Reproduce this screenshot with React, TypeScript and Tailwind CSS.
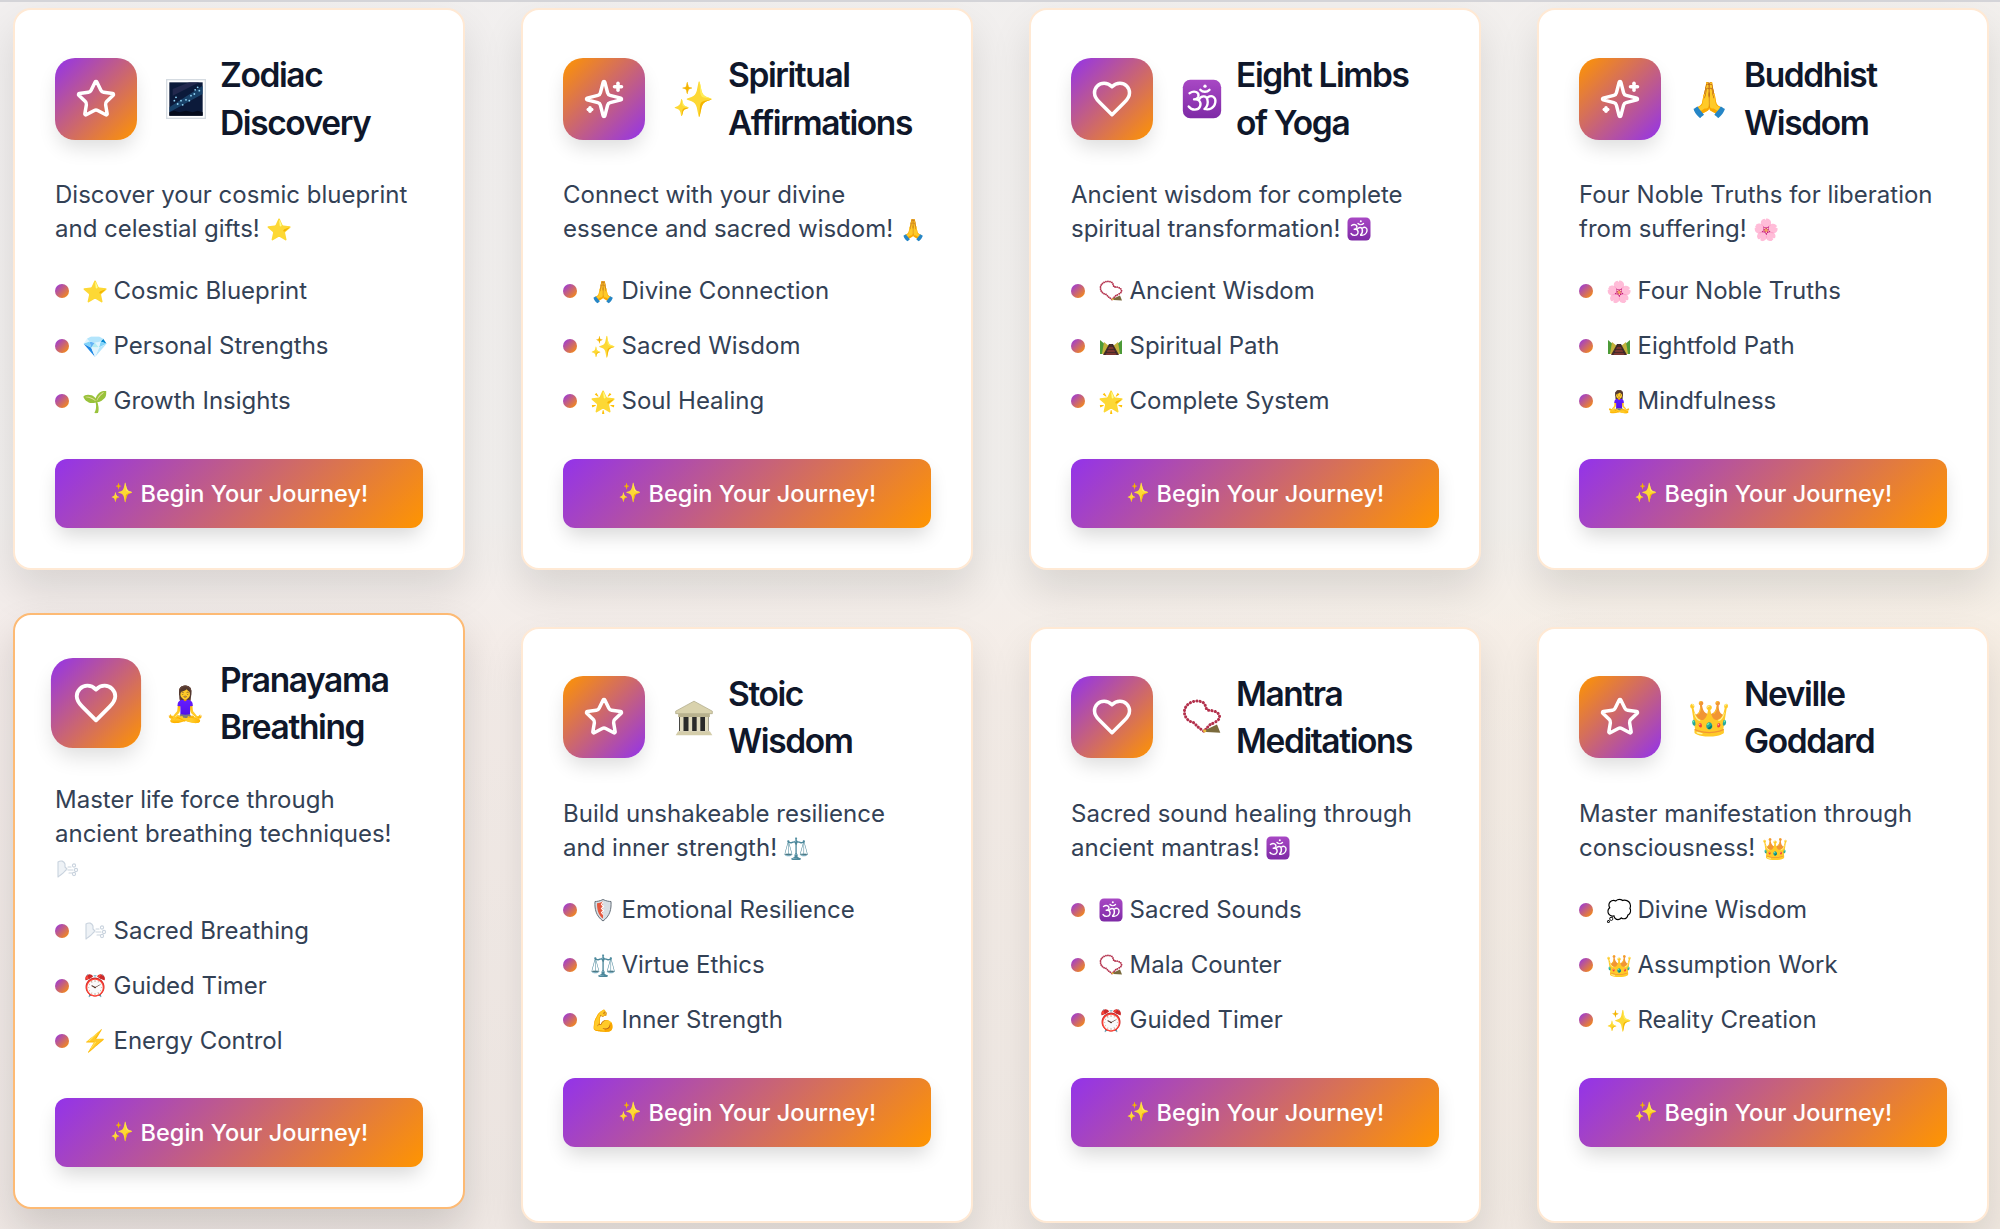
import React from "react";

type Card = { icon: "star" | "spark" | "heart"; from: "purple" | "orange"; emoji: string; t: [string, string]; d: string; de: string; f: [string, string][]; hover?: boolean };

const cards: Card[] = [
  { icon: "star", from: "purple", emoji: "galaxy", t: ["Zodiac", "Discovery"], d: "Discover your cosmic blueprint and celestial gifts!", de: "⭐", f: [["⭐", "Cosmic Blueprint"], ["💎", "Personal Strengths"], ["🌱", "Growth Insights"]] },
  { icon: "spark", from: "orange", emoji: "✨", t: ["Spiritual", "Affirmations"], d: "Connect with your divine essence and sacred wisdom!", de: "🙏", f: [["🙏", "Divine Connection"], ["✨", "Sacred Wisdom"], ["🌟", "Soul Healing"]] },
  { icon: "heart", from: "purple", emoji: "om", t: ["Eight Limbs", "of Yoga"], d: "Ancient wisdom for complete spiritual transformation!", de: "om", f: [["mala", "Ancient Wisdom"], ["track", "Spiritual Path"], ["🌟", "Complete System"]] },
  { icon: "spark", from: "orange", emoji: "🙏", t: ["Buddhist", "Wisdom"], d: "Four Noble Truths for liberation from suffering!", de: "🌸", f: [["🌸", "Four Noble Truths"], ["track", "Eightfold Path"], ["🧘‍♀️", "Mindfulness"]] },
  { icon: "heart", from: "purple", emoji: "🧘‍♀️", t: ["Pranayama", "Breathing"], d: "Master life force through ancient breathing techniques!", de: "wind", f: [["wind", "Sacred Breathing"], ["⏰", "Guided Timer"], ["⚡", "Energy Control"]], hover: true },
  { icon: "star", from: "orange", emoji: "temple", t: ["Stoic", "Wisdom"], d: "Build unshakeable resilience and inner strength!", de: "⚖️", f: [["shield", "Emotional Resilience"], ["⚖️", "Virtue Ethics"], ["💪", "Inner Strength"]] },
  { icon: "heart", from: "purple", emoji: "mala", t: ["Mantra", "Meditations"], d: "Sacred sound healing through ancient mantras!", de: "om", f: [["om", "Sacred Sounds"], ["mala", "Mala Counter"], ["⏰", "Guided Timer"]] },
  { icon: "star", from: "orange", emoji: "👑", t: ["Neville", "Goddard"], d: "Master manifestation through consciousness!", de: "👑", f: [["💭", "Divine Wisdom"], ["👑", "Assumption Work"], ["✨", "Reality Creation"]] },
];

function Drawn({ name }: { name: string }) {
  return (
    <svg viewBox="0 0 24 24" className="block h-full w-full">
      {name === "om" && (
        <>
          <defs>
            <linearGradient id="omg" x1="0" y1="0" x2="0" y2="1">
              <stop offset="0" stopColor="#a848c4" />
              <stop offset="1" stopColor="#7e2aa6" />
            </linearGradient>
          </defs>
          <rect x="0.5" y="0.5" width="23" height="23" rx="4.5" fill="url(#omg)" />
          <g fill="none" stroke="#fff" strokeWidth="1.4" strokeLinecap="round" strokeLinejoin="round">
            <path d="M4.5 8.5 C7.5 6.5 10.5 8 9.8 10.5 C9.4 11.7 8.4 12.2 7.2 12.2 C10.2 11.8 11.8 14 10.8 16.5 C9.8 19 5.8 19 4 16.5" />
            <path d="M10 12.5 C11.5 10 14.5 9.7 15.2 12.2 C15.8 14.4 15.8 16 13.6 18" />
            <path d="M15.5 11 C18 9.3 20.5 11 20 14 C19.5 17.2 16.5 18.8 13.6 18" />
            <path d="M11 6.5 C12.5 8 15 8 16.5 6.5" />
          </g>
          <circle cx="13.8" cy="4.3" r="1" fill="#fff" />
        </>
      )}
      {name === "galaxy" && (
        <>
          <rect x="0.4" y="0.4" width="23.2" height="23.2" fill="#fff" stroke="#d5dbe1" strokeWidth="0.8" />
          <rect x="2" y="2" width="20" height="20" fill="#0b1a3a" />
          <path d="M2 17 L22 4 V9 L2 20Z" fill="#1d4f78" opacity="0.75" />
          <path d="M4 6 L14 2 H20 L4 10Z" fill="#2c2f55" opacity="0.7" />
          {[[5, 13], [7, 15], [9, 13], [10, 15.5], [12, 12.5], [14, 13], [15, 10], [17, 9], [17.5, 6.5], [19, 5], [20, 7], [6, 11]].map(([x, y]) => (
            <circle key={x + "-" + y} cx={x} cy={y} r="0.55" fill="#8fd3f4" />
          ))}
          <path d="M2 20 L5 19 L8 20 L12 19 L16 20 L19 19 L22 20 V22 H2Z" fill="#050b1c" />
        </>
      )}
      {name === "mala" && (
        <>
          <path d="M13 20.5 C11 19 9 18 7.5 15.5 C4 15 1 12 1.5 8 C2.5 3 9 1 13 3.5 C14.5 5 14 7 15.5 8 C18 8 22 8.5 22.5 11.5 C23 14 19 15.5 17 16.5 C15.5 17.5 15 19 13 20.5" fill="none" stroke="#b3304c" strokeWidth="1.8" strokeLinecap="round" strokeDasharray="0.1 1.9" />
          <path d="M14 19.8 L21 16.5 L23 21.5 L14.5 21Z" fill="#7a6a3c" />
          <circle cx="13.6" cy="20.3" r="1" fill="#e8b93a" />
        </>
      )}
      {name === "wind" && (
        <g fill="none" stroke="#c9d3de" strokeWidth="1.1" strokeLinejoin="round" strokeLinecap="round">
          <path d="M3 20 L3 5 C6 3 9 4 10 7 L10 10 L12 12 L10 14 C8 17 5 18 3 20Z" fill="#eef2f6" />
          <path d="M13 10 H16 M13 13 H18 M14 16 H17" />
          <circle cx="19" cy="8.5" r="1.6" />
          <circle cx="21" cy="13" r="1.6" />
          <circle cx="19" cy="17" r="1.6" />
        </g>
      )}
      {name === "shield" && (
        <>
          <path d="M12 1.5 C15 3 18 3.5 20 3.5 C20.5 11 19 18 12 23 C5 18 3.5 11 4 3.5 C6 3.5 9 3 12 1.5Z" fill="#d8dde2" stroke="#66707a" strokeWidth="1" />
          <path d="M12 3.5 C10 4.5 8 5 6 5.2 C6 11 7 17 12 20.5Z" fill="#e4573d" />
          <path d="M12 4 L10.5 6.5 L12.5 8.5 L10.5 10.5 L12.5 12.5 L10.5 14.5 L12 16.5" fill="none" stroke="#fff" strokeWidth="1.1" />
        </>
      )}
      {name === "track" && (
        <>
          <path d="M1 6 L8 12 L3 20 H1Z" fill="#4c9a37" />
          <path d="M23 6 L16 12 L21 20 H23Z" fill="#4c9a37" />
          <path d="M5 8 L10 12 L7 20 H3Z" fill="#c3b13c" />
          <path d="M19 8 L14 12 L17 20 H21Z" fill="#c3b13c" />
          <path d="M10 10 H14 L20 21 H4Z" fill="#4a2a26" />
          <path d="M9 14 H15 M7.5 17 H16.5 M6 20 H18" stroke="#a9433a" strokeWidth="1.1" />
          <path d="M11 10 L6 21 M13 10 L18 21" stroke="#2a2a2e" strokeWidth="0.8" />
        </>
      )}
      {name === "temple" && (
        <>
          <path d="M12 2.5 L23 8.5 V10 H1 V8.5Z" fill="#d9d2ad" stroke="#a8a27e" strokeWidth="0.4" />
          <rect x="2.5" y="10" width="19" height="2" fill="#b9b28e" />
          <rect x="3" y="12" width="18" height="8.5" fill="#2a2a2a" />
          {[3.5, 8.7, 13.6, 18.6].map((x) => (
            <rect key={x} x={x} y="12" width="2.2" height="8.5" fill="#e2dcc0" />
          ))}
          <path d="M2.5 20.5 H21.5 L23 23 H1Z" fill="#d4cdaa" />
        </>
      )}
    </svg>
  );
}

const isDrawn = (e: string) => ["om", "galaxy", "mala", "wind", "shield", "track", "temple"].includes(e);

function Inline({ e }: { e: string }) {
  if (isDrawn(e)) {
    return (
      <span className="inline-block h-[24px] w-[24px] align-[-4px]">
        <Drawn name={e} />
      </span>
    );
  }
  return <span className="text-[21px] leading-none">{e}</span>;
}

function Icon({ name }: { name: Card["icon"] }) {
  return (
    <svg viewBox="0 0 24 24" fill="none" stroke="#fff" strokeWidth="2" strokeLinecap="round" strokeLinejoin="round" className="h-[42px] w-[42px]">
      {name === "star" && <path d="M11.525 2.295a.53.53 0 0 1 .95 0l2.31 4.679a2.123 2.123 0 0 0 1.595 1.16l5.166.756a.53.53 0 0 1 .294.904l-3.736 3.638a2.123 2.123 0 0 0-.611 1.878l.882 5.14a.53.53 0 0 1-.771.56l-4.618-2.428a2.122 2.122 0 0 0-1.973 0L6.396 21.01a.53.53 0 0 1-.77-.56l.881-5.139a2.122 2.122 0 0 0-.611-1.879L2.16 9.795a.53.53 0 0 1 .294-.906l5.165-.755a2.122 2.122 0 0 0 1.597-1.16z" />}
      {name === "heart" && <path d="M19 14c1.49-1.46 3-3.21 3-5.5A5.5 5.5 0 0 0 16.5 3c-1.76 0-3 .5-4.5 2-1.5-1.5-2.74-2-4.5-2A5.5 5.5 0 0 0 2 8.5c0 2.3 1.5 4.05 3 5.5l7 7Z" />}
      {name === "spark" && (
        <>
          <path d="M9.937 15.5A2 2 0 0 0 8.5 14.063l-6.135-1.582a.5.5 0 0 1 0-.962L8.5 9.936A2 2 0 0 0 9.937 8.5l1.582-6.135a.5.5 0 0 1 .963 0L14.063 8.5A2 2 0 0 0 15.5 9.937l6.135 1.581a.5.5 0 0 1 0 .964L15.5 14.063a2 2 0 0 0-1.437 1.437l-1.582 6.135a.5.5 0 0 1-.963 0z" />
          <path d="M20 3v4" />
          <path d="M22 5h-4" />
          <path d="M4 17v2" />
          <path d="M5 18H3" />
        </>
      )}
    </svg>
  );
}

function CardView({ c }: { c: Card }) {
  return (
    <div className={"flex flex-col rounded-[18px] border-2 bg-white px-[40px] pb-[40px] pt-[40px] " + (c.hover ? "-translate-y-[14px] border-[#fdba74] shadow-[0_20px_40px_rgba(0,0,0,0.14)]" : "border-[#ffe9d4] shadow-[0_20px_40px_rgba(0,0,0,0.11)]")}>
      <div className="flex items-center gap-[28px]">
        <div
          className={
            "flex h-[82px] w-[82px] shrink-0 items-center justify-center rounded-[20px] shadow-[0_10px_20px_-3px_rgba(0,0,0,0.14)] " +
            (c.hover ? "scale-110 " : "") +
            (c.from === "purple" ? "bg-[linear-gradient(135deg,#9333ea,#ff9500)]" : "bg-[linear-gradient(135deg,#ff9500,#9333ea)]")
          }
        >
          <Icon name={c.icon} />
        </div>
        <h3 className="flex items-center text-[33.5px] font-semibold leading-[47.5px] tracking-[-1.4px] text-[#0f172a]">
          <span className="mr-[14px] flex w-[41px] items-center justify-center text-[34px] tracking-normal">
            {isDrawn(c.emoji) ? (
              <span className="h-[40px] w-[40px]">
                <Drawn name={c.emoji} />
              </span>
            ) : (
              c.emoji
            )}
          </span>
          <span className="pt-[2px]">
            {c.t[0]}
            <br />
            {c.t[1]}
          </span>
        </h3>
      </div>
      <p className="mt-[31px] text-[24px] leading-[34.4px] text-[#334155]">
        {c.d} {c.de === "wind" && <br />}
        <Inline e={c.de} />
      </p>
      <ul className="mt-[17px] flex flex-col">
        {c.f.map(([e, x]) => (
          <li key={x} className="flex h-[55px] items-center text-[24px] text-[#334155]">
            <span className="mr-[14px] h-[14px] w-[14px] shrink-0 rounded-full bg-[linear-gradient(135deg,#9333ea,#ff9500)]" />
            <span className="mr-[6.5px] flex h-[24px] w-[24px] items-center justify-center">
              <Inline e={e} />
            </span>
            {x}
          </li>
        ))}
      </ul>
      <button className="mt-[30px] flex h-[69px] w-full items-center justify-center gap-[7px] rounded-[12px] bg-[linear-gradient(135deg,#9333ea,#ff9500)] text-[23.5px] font-medium text-white shadow-[0_10px_20px_-3px_rgba(0,0,0,0.16)]">
        <span className="text-[19px]">✨</span>
        <span>Begin Your Journey!</span>
      </button>
    </div>
  );
}

export default function App() {
  return (
    <div
      className="h-[1229px] overflow-hidden border-t-2 border-[#d4d4d8] bg-[linear-gradient(180deg,rgba(241,240,240,0.75)_0%,rgba(241,240,238,0.7)_42%,rgba(246,236,228,0.3)_52%,rgba(236,228,222,0.55)_100%),linear-gradient(90deg,#f3ecec_0%,#f4eeea_50%,#f7efe4_100%)] pl-[13px] pr-[11px] pt-[6px]"
      style={{ fontFamily: 'Inter, "Noto Color Emoji", sans-serif' }}
    >
      <div className="grid grid-cols-4 gap-x-[56px] gap-y-[57px]">
        {cards.map((c) => (
          <CardView key={c.t[0]} c={c} />
        ))}
      </div>
    </div>
  );
}
